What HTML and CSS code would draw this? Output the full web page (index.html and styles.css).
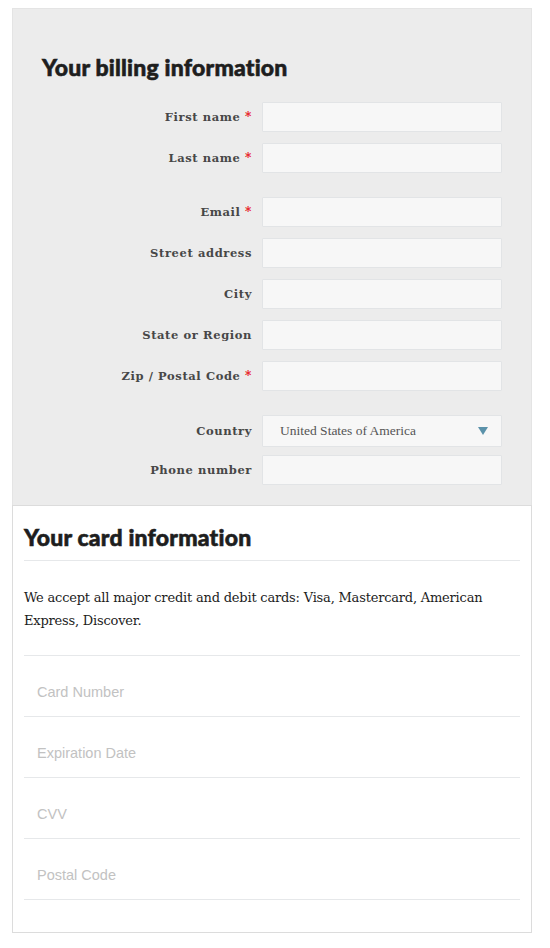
FILE: index.html
```html
<!DOCTYPE html>
<html>
<head>
<meta charset="utf-8">
<link rel="stylesheet" href="styles.css">
</head>
<body>
<div class="page">
  <section class="billing">
    <h2 class="billing-title">Your billing information</h2>
    <div class="rows">
      <div class="row"><span class="label">First name <span class="req">*</span></span><span class="input"></span></div>
      <div class="row"><span class="label">Last name <span class="req">*</span></span><span class="input"></span></div>
      <div class="row group-start"><span class="label">Email <span class="req">*</span></span><span class="input"></span></div>
      <div class="row"><span class="label">Street address</span><span class="input"></span></div>
      <div class="row"><span class="label">City</span><span class="input"></span></div>
      <div class="row"><span class="label">State or Region</span><span class="input"></span></div>
      <div class="row"><span class="label">Zip / Postal Code <span class="req">*</span></span><span class="input"></span></div>
      <div class="row group-start country-row"><span class="label">Country</span><span class="input select"><span class="select-text">United States of America</span><svg class="caret" width="10" height="8" viewBox="0 0 10 8"><path d="M0 0 H10 L5 8 Z" fill="#5b92aa"/></svg></span></div>
      <div class="row phone-row"><span class="label">Phone number</span><span class="input"></span></div>
    </div>
  </section>
  <section class="card">
    <h2 class="card-title">Your card information</h2>
    <p class="card-note">We accept all major credit and debit cards: Visa, Mastercard, American Express, Discover.</p>
    <div class="fields">
      <div class="field">Card Number</div>
      <div class="field">Expiration Date</div>
      <div class="field">CVV</div>
      <div class="field">Postal Code</div>
    </div>
  </section>
</div>
</body>
</html>
```
FILE: styles.css
```css
html, body {
  margin: 0;
  padding: 0;
  background: #ffffff;
}
.page {
  padding: 8px 0 0 12px;
  width: 520px;
}
.billing {
  background: #ececec;
  border: 1px solid #e4e4e4;
  border-bottom: none;
  padding: 44px 29px 20px 0;
}
.billing-title {
  margin: 0 0 21px 29px;
  font-family: Lato, "Liberation Sans", sans-serif;
  font-weight: 900;
  font-size: 23px;
  line-height: 28px;
  color: #1e1e1e;
  -webkit-text-stroke: 0.6px #1e1e1e;
  letter-spacing: 0.2px;
}
.rows {
  display: flex;
  flex-direction: column;
  gap: 11px;
}
.row {
  display: flex;
  align-items: center;
  gap: 10px;
}
.row.group-start {
  margin-top: 13px;
}
.country-row .input {
  height: 30px;
}
.phone-row {
  margin-top: -3px;
}
.label {
  width: 239px;
  text-align: right;
  font-family: "DejaVu Serif", "Liberation Serif", serif;
  font-weight: bold;
  font-size: 11.5px;
  letter-spacing: 0.6px;
  color: #474747;
}
.req {
  color: #e8141b;
  font-size: 12px;
}
.input {
  display: block;
  width: 238px;
  height: 28px;
  background: #f7f7f7;
  border: 1px solid #e2e4e6;
  border-radius: 1px;
}
.select {
  display: flex;
  align-items: center;
  justify-content: space-between;
  padding: 0 13px 0 17px;
  width: 208px;
}
.select-text {
  font-family: "Liberation Serif", serif;
  font-size: 13.5px;
  color: #555555;
}
.caret {
  display: block;
}
.card {
  border: 1px solid #dcdcdc;
  background: #ffffff;
  padding: 17px 11px 32px 11px;
}
.card-title {
  margin: 0;
  padding-bottom: 9px;
  border-bottom: 1px solid #e6e8ea;
  font-family: Lato, "Liberation Sans", sans-serif;
  font-weight: 900;
  font-size: 23px;
  line-height: 28px;
  color: #1e1e1e;
  -webkit-text-stroke: 0.6px #1e1e1e;
  letter-spacing: 0.2px;
}
.card-note {
  margin: 25px 0 23px 0;
  font-family: "DejaVu Serif", "Liberation Serif", serif;
  font-size: 13px;
  line-height: 23px;
  letter-spacing: -0.2px;
  color: #1c1c1c;
}
.fields {
  border-top: 1px solid #e6e8ea;
}
.field {
  height: 34px;
  padding: 26px 0 0 13px;
  border-bottom: 1px solid #e6e8ea;
  font-family: "Liberation Sans", Arial, sans-serif;
  font-size: 14.5px;
  line-height: 20px;
  color: #c2c2c2;
}
```
